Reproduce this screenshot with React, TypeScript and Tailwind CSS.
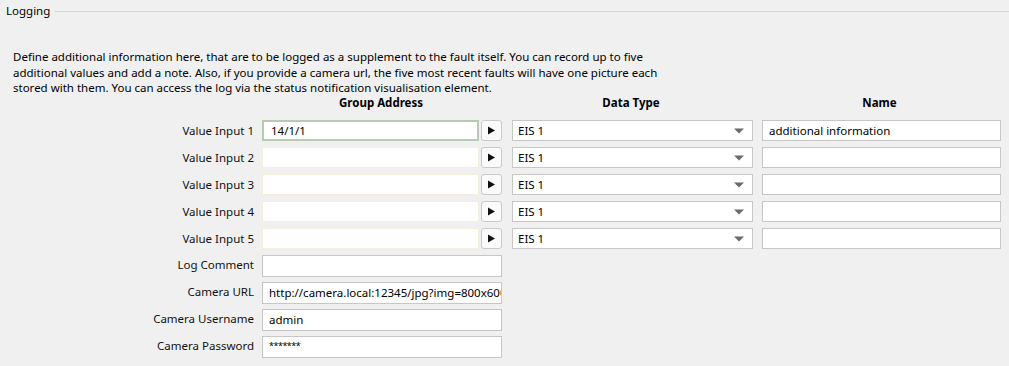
import React from "react";

const font = { fontFamily: '"Noto Sans", "Open Sans", sans-serif' };

function Arrow() {
  return (
    <button className="w-[21px] h-[21px] ml-[2px] rounded-[3px] border border-[#c9c9c9] bg-[#fafafa] flex items-center justify-center">
      <svg width="9" height="9" viewBox="0 0 9 9">
        <polygon points="1,0.5 8,4.5 1,8.5" fill="#111" />
      </svg>
    </button>
  );
}

function Select() {
  return (
    <div className="ml-[10px] w-[241px] h-[21px] border border-[#c7c7c7] bg-white flex items-center pl-[5px] pr-[5px] text-[11.5px] text-black">
      <span className="flex-1">EIS 1</span>
      <svg width="10" height="6" viewBox="0 0 10 6" className="mr-[3px]">
        <polygon points="0,0.5 10,0.5 5,5.5" fill="#6b6b6b" />
      </svg>
    </div>
  );
}

function Row({ label, first, value, name }: { label: string; first?: boolean; value?: string; name?: string }) {
  return (
    <div className="flex items-center h-[21px]">
      <div className="w-[254px] text-right text-[11.5px] text-[#111]">{label}</div>
      <div
        className={
          "ml-[8px] w-[217px] h-[21px] bg-white flex items-center pl-[7px] text-[11.5px] text-black " +
          (first ? "border-2 border-[#b6cbb1]" : "border border-[#f3efdc]")
        }
      >
        {value}
      </div>
      <Arrow />
      <Select />
      <div className="ml-[9px] w-[239px] h-[21px] border border-[#c7c7c7] bg-white flex items-center pl-[6px] text-[11.5px] text-black">
        {name}
      </div>
    </div>
  );
}

function Simple({ label, value, small }: { label: string; value?: string; small?: boolean }) {
  return (
    <div className="flex items-center h-[21px]">
      <div className="w-[254px] text-right text-[11.5px] text-[#111] -mt-[2px]">{label}</div>
      <div className="ml-[8px] w-[240px] h-[22px] border border-[#c7c7c7] bg-white flex items-center pl-[6px] text-[11.5px] text-black overflow-hidden whitespace-nowrap">
        <span className={small ? "text-[9px] tracking-[-0.5px] -mt-[2px]" : ""}>{value}</span>
      </div>
    </div>
  );
}

export default function App() {
  return (
    <div className="w-[1009px] h-[366px] bg-[#f0f0f0] overflow-hidden" style={font}>
      <div className="flex items-center pt-[3px] pl-[6px]">
        <span className="text-[11.5px] text-black leading-[16px]">Logging</span>
        <div className="flex-1 h-px bg-[#d3d3d3] ml-[5px] mt-[1px]" />
      </div>
      <div className="pl-[13px] pt-[30px] text-[11.5px] leading-[15.5px] text-black whitespace-nowrap">
        Define additional information here, that are to be logged as a supplement to the fault itself. You can record up to five
        <br />
        additional values and add a note. Also, if you provide a camera url, the five most recent faults will have one picture each
        <br />
        stored with them. You can access the log via the status notification visualisation element.
      </div>
      <div className="flex text-[11.5px] font-bold text-black h-[13px] leading-[13px]">
        <div className="w-[262px]" />
        <div className="w-[238px] text-center">Group Address</div>
        <div className="w-[11px]" />
        <div className="w-[240px] text-center">Data Type</div>
        <div className="w-[9px]" />
        <div className="w-[239px] text-center">Name</div>
      </div>
      <div className="flex flex-col gap-[6px] mt-[11.5px]">
        <Row label="Value Input 1" first value="14/1/1" name="additional information" />
        <Row label="Value Input 2" />
        <Row label="Value Input 3" />
        <Row label="Value Input 4" />
        <Row label="Value Input 5" />
        <Simple label="Log Comment" />
        <Simple label="Camera URL" value="http://camera.local:12345/jpg?img=800x600" />
        <Simple label="Camera Username" value="admin" />
        <Simple label="Camera Password" value="*******" small />
      </div>
    </div>
  );
}
